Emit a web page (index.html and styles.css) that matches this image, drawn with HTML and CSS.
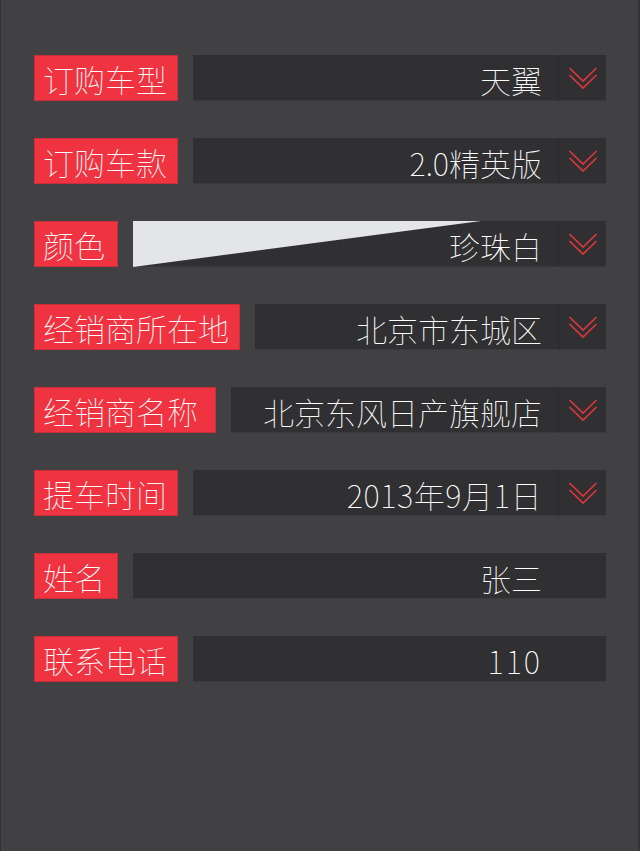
FILE: index.html
```html
<!DOCTYPE html>
<html lang="zh-CN">
<head>
<meta charset="utf-8">
<title>订购信息</title>
<link rel="stylesheet" href="styles.css">
</head>
<body>
<main class="form">
  <div class="row">
    <span class="label">订购车型</span>
    <div class="field"><span class="value">天翼</span><span class="arrow"><svg viewBox="0 0 30 24" width="30" height="24"><path d="M1.5 1 L15 14 L28.5 1 M1.5 8 L15 21 L28.5 8" fill="none" stroke="#db383d" stroke-width="1.7"/></svg></span></div>
  </div>
  <div class="row">
    <span class="label">订购车款</span>
    <div class="field"><span class="value">2.0精英版</span><span class="arrow"><svg viewBox="0 0 30 24" width="30" height="24"><path d="M1.5 1 L15 14 L28.5 1 M1.5 8 L15 21 L28.5 8" fill="none" stroke="#db383d" stroke-width="1.7"/></svg></span></div>
  </div>
  <div class="row">
    <span class="label label--short">颜色</span>
    <div class="field field--swatch"><span class="value">珍珠白</span><span class="arrow"><svg viewBox="0 0 30 24" width="30" height="24"><path d="M1.5 1 L15 14 L28.5 1 M1.5 8 L15 21 L28.5 8" fill="none" stroke="#db383d" stroke-width="1.7"/></svg></span></div>
  </div>
  <div class="row">
    <span class="label">经销商所在地</span>
    <div class="field"><span class="value">北京市东城区</span><span class="arrow"><svg viewBox="0 0 30 24" width="30" height="24"><path d="M1.5 1 L15 14 L28.5 1 M1.5 8 L15 21 L28.5 8" fill="none" stroke="#db383d" stroke-width="1.7"/></svg></span></div>
  </div>
  <div class="row">
    <span class="label label--wide">经销商名称</span>
    <div class="field"><span class="value">北京东风日产旗舰店</span><span class="arrow"><svg viewBox="0 0 30 24" width="30" height="24"><path d="M1.5 1 L15 14 L28.5 1 M1.5 8 L15 21 L28.5 8" fill="none" stroke="#db383d" stroke-width="1.7"/></svg></span></div>
  </div>
  <div class="row">
    <span class="label">提车时间</span>
    <div class="field"><span class="value value--date">2013年9月1日</span><span class="arrow"><svg viewBox="0 0 30 24" width="30" height="24"><path d="M1.5 1 L15 14 L28.5 1 M1.5 8 L15 21 L28.5 8" fill="none" stroke="#db383d" stroke-width="1.7"/></svg></span></div>
  </div>
  <div class="row">
    <span class="label label--short">姓名</span>
    <div class="field field--plain"><span class="value">张三</span></div>
  </div>
  <div class="row">
    <span class="label">联系电话</span>
    <div class="field field--plain"><span class="value value--num">110</span></div>
  </div>
</main>
</body>
</html>
```

FILE: styles.css
```css
html, body {
  margin: 0;
  padding: 0;
  height: 100%;
}

body {
  background: #414143;
  border-left: 1px solid #333335;
  border-right: 2px solid #343436;
  box-sizing: border-box;
  min-height: 851px;
  font-family: "Noto Sans CJK SC", "Noto Sans", sans-serif;
  font-weight: 100;
  color: #ffffff;
}

.form {
  display: flex;
  flex-direction: column;
  gap: 37px;
  padding: 55px 32px 0 33px;
}

.row {
  display: flex;
  align-items: stretch;
  gap: 15px;
  height: 46px;
}

.label {
  flex: none;
  display: flex;
  align-items: center;
  padding: 0 11px 0 9px;
  background: #ef3340;
  box-shadow: inset 0 0 0 1px #c92f3a;
  color: #ffffff;
  font-size: 31px;
  line-height: 1;
  white-space: nowrap;
}

.label--short {
  width: 84px;
  box-sizing: border-box;
}

.label--wide {
  padding-right: 18px;
}

.field {
  flex: 1;
  position: relative;
  display: flex;
  align-items: stretch;
  background: #302f31;
  box-shadow: inset 0 -1px 0 #3a393b;
}

.field--plain {
  padding-right: 48px;
}

.value {
  position: relative;
  flex: 1;
  display: flex;
  align-items: center;
  justify-content: flex-end;
  padding: 2px 16px 0 0;
  font-size: 31px;
  line-height: 1;
  white-space: nowrap;
}

.value--date {
  letter-spacing: 0.6px;
}

.value--num {
  letter-spacing: 2px;
}

.arrow {
  flex: none;
  width: 47px;
  display: flex;
  align-items: center;
  justify-content: center;
  border-left: 1px solid #2a292b;
}

.arrow svg {
  display: block;
  margin-top: 2px;
}

.field--swatch::before {
  content: "";
  position: absolute;
  left: 0;
  top: 0;
  bottom: 0;
  width: 348px;
  background: #e4e5e7;
  clip-path: polygon(0 0, 100% 0, 0 100%);
}
```
